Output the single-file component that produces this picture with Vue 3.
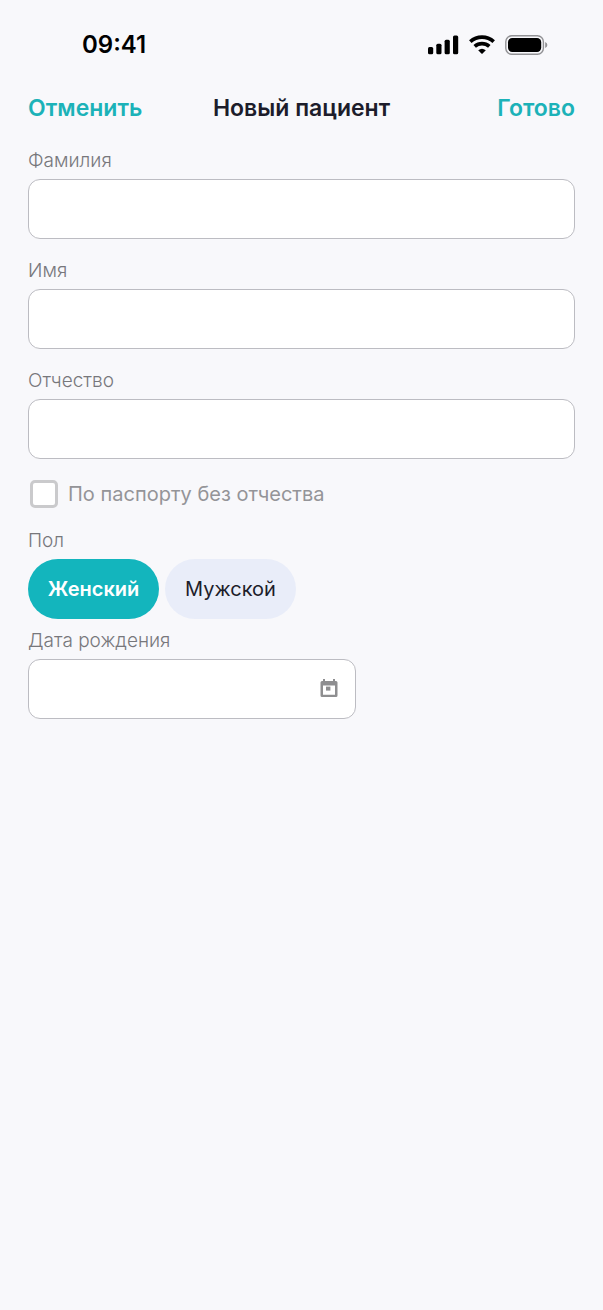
<script setup>
import { ref } from 'vue'

const nameFields = [
  { id: 'last-name', label: 'Фамилия' },
  { id: 'first-name', label: 'Имя' },
  { id: 'middle-name', label: 'Отчество' },
]
const values = ref({ 'last-name': '', 'first-name': '', 'middle-name': '' })
const noMiddleName = ref(false)
const genders = ['Женский', 'Мужской']
const gender = ref('Женский')
const birthDate = ref('')
</script>

<template>
  <div class="screen">
    <div class="status">
      <span class="time">09:41</span>
      <div class="indicators">
        <svg width="31" height="20" viewBox="0 0 31 20" aria-hidden="true">
          <rect x="0" y="12" width="5.2" height="7.3" rx="1.5" />
          <rect x="8.3" y="8.8" width="5.2" height="10.5" rx="1.5" />
          <rect x="16.6" y="4.8" width="5.2" height="14.5" rx="1.5" />
          <rect x="25" y="0.6" width="5.2" height="18.7" rx="1.5" />
        </svg>
        <svg width="26" height="20" viewBox="0 0 26 20" aria-hidden="true">
          <g fill="none" stroke="#000" stroke-width="3.7">
            <path d="M1.3 6.7C8 .6 18 .6 24.7 6.7" />
            <path d="M5.7 11.4C10 7.6 16 7.6 20.3 11.4" />
          </g>
          <path d="M9.2 15.2Q13 12.1 16.8 15.2L13.6 18.5Q13 19 12.4 18.5Z" />
        </svg>
        <svg width="43" height="20" viewBox="0 0 43 20" aria-hidden="true">
          <rect x="0.8" y="0.8" width="37.6" height="18.4" rx="6" fill="none" stroke="#929295" stroke-width="1.4" />
          <rect x="3" y="3" width="33.2" height="14" rx="4.2" />
          <path d="M40.2 7Q42.4 8 42.4 10T40.2 13Z" fill="#929295" />
        </svg>
      </div>
    </div>

    <header class="bar">
      <button type="button" class="action">Отменить</button>
      <h1 class="title">Новый пациент</h1>
      <button type="button" class="action done">Готово</button>
    </header>

    <form class="form" @submit.prevent>
      <div v-for="field in nameFields" :key="field.id" class="field">
        <label class="label" :for="field.id">{{ field.label }}</label>
        <input :id="field.id" v-model="values[field.id]" class="box" type="text" />
      </div>

      <label class="check">
        <input v-model="noMiddleName" type="checkbox" class="tick" />
        <span>По паспорту без отчества</span>
      </label>

      <fieldset class="gender">
        <legend class="label">Пол</legend>
        <div class="pills">
          <button
            v-for="item in genders"
            :key="item"
            type="button"
            class="pill"
            :class="{ active: gender === item }"
            :aria-pressed="gender === item"
            @click="gender = item"
          >{{ item }}</button>
        </div>
      </fieldset>

      <div class="birth">
        <label class="label" for="birth-date">Дата рождения</label>
        <div class="box date">
          <input id="birth-date" v-model="birthDate" class="date-input" type="text" inputmode="numeric" />
          <svg width="18" height="20" viewBox="0 0 18 20" aria-hidden="true">
            <path fill="#8e8e90" fill-rule="evenodd" d="M3 0H5V2H13V0H15V2H16Q17.5 2 17.5 3.5V16.5Q17.5 18 16 18H2Q.5 18 .5 16.5V3.5Q.5 2 2 2H3ZM3 6.5V15.7H15V6.5Z" />
            <rect x="6" y="7.6" width="4.4" height="4" fill="#8e8e90" />
          </svg>
        </div>
      </div>
    </form>
  </div>
</template>

<style>
body {
  background: #f8f8fb;
}
</style>

<style scoped>
.screen {
  min-height: 100vh;
  box-sizing: border-box;
  background: #f8f8fb;
  color: #1d1d2b;
  font-family: Inter, "Noto Sans", sans-serif;
}
.screen * {
  box-sizing: border-box;
}
.status {
  display: flex;
  align-items: center;
  justify-content: space-between;
  height: 88px;
  padding: 1px 55px 0 82px;
  color: #000;
}
.time {
  font-size: 24px;
  line-height: 32px;
  font-weight: 600;
}
.indicators {
  display: flex;
  align-items: center;
  gap: 10px;
}
.bar {
  display: grid;
  grid-template-columns: 1fr auto 1fr;
  align-items: center;
  height: 40px;
  padding: 0 28px;
}
button {
  margin: 0;
  border: 0;
  font-family: inherit;
  cursor: pointer;
}
.action {
  justify-self: start;
  padding: 0;
  background: none;
  color: #1cb2b8;
  font-size: 23px;
  line-height: 32px;
  font-weight: 600;
}
.done {
  justify-self: end;
}
.title {
  margin: 0;
  font-size: 23px;
  line-height: 32px;
  font-weight: 600;
}
.form {
  display: flex;
  flex-direction: column;
  padding: 21px 28px 0;
}
.field {
  display: flex;
  flex-direction: column;
  gap: 6px;
  margin-bottom: 20px;
}
.label {
  display: block;
  padding: 0;
  color: #77777b;
  font-size: 19px;
  line-height: 24px;
  font-weight: 300;
}
.box {
  width: 100%;
  height: 60px;
  margin: 0;
  padding: 0 17px;
  border: 1px solid #bcbcc2;
  border-radius: 12px;
  background: #fff;
  color: inherit;
  font: inherit;
  font-size: 20px;
}
.check {
  display: flex;
  align-items: center;
  align-self: start;
  gap: 10px;
  height: 30px;
  padding-left: 2px;
  margin-bottom: 20px;
  color: #949498;
  font-size: 20px;
  line-height: 30px;
}
.tick {
  appearance: none;
  flex: none;
  width: 28px;
  height: 28px;
  margin: 0;
  border: 3px solid #cacacc;
  border-radius: 5px;
  background: #fff;
}
.tick:checked {
  border-color: #13b5bd;
  background: #13b5bd;
}
.gender {
  min-width: 0;
  margin: 0 0 10px;
  padding: 0;
  border: 0;
}
.pills {
  display: flex;
  gap: 6px;
  padding-top: 6px;
}
.pill {
  width: 131px;
  height: 60px;
  padding: 0;
  border-radius: 30px;
  background: #e9edf9;
  color: #1d1d2b;
  font-size: 20px;
  line-height: 28px;
}
.pill.active {
  background: #13b5bd;
  color: #fff;
  font-weight: 600;
}
.birth {
  display: flex;
  flex-direction: column;
  gap: 6px;
  width: 60%;
}
.date {
  display: flex;
  align-items: center;
  gap: 12px;
}
.date-input {
  flex: 1;
  min-width: 0;
  height: 100%;
  padding: 0;
  border: 0;
  outline: 0;
  background: none;
  font: inherit;
}
</style>
